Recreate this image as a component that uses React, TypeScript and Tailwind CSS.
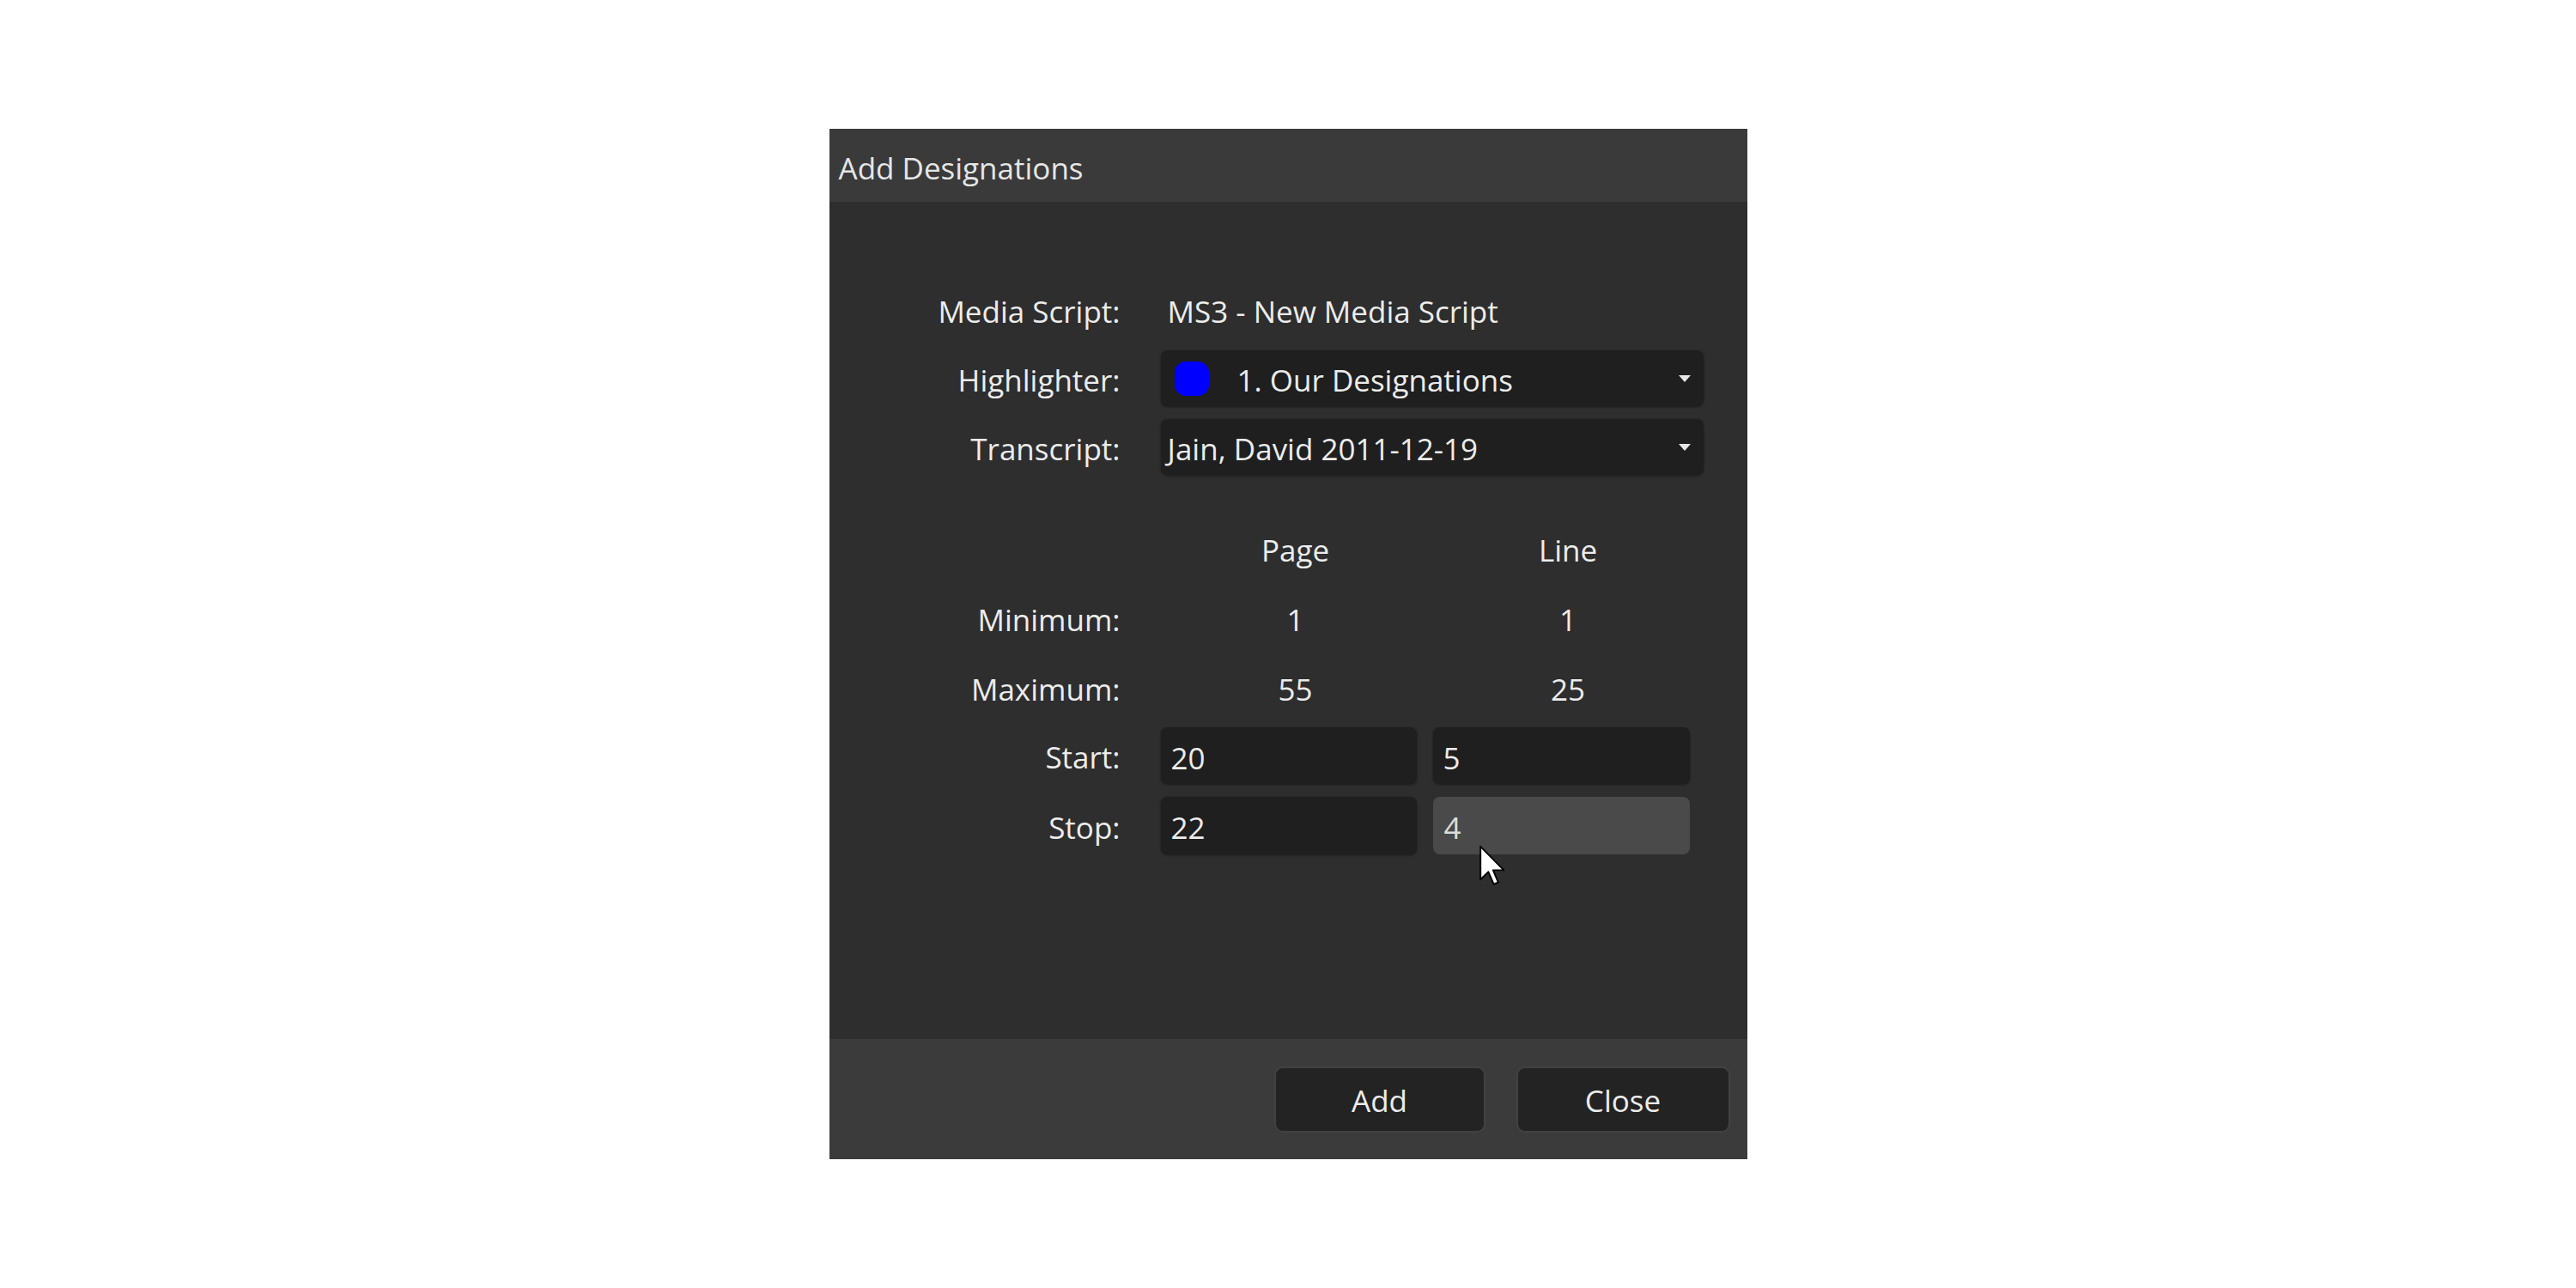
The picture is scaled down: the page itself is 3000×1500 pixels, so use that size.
import React from "react";

const font = { fontFamily: '"Open Sans", "Noto Sans", "Liberation Sans", sans-serif' };

function Caret() {
  return (
    <svg width="14" height="10" viewBox="0 0 14 10" className="shrink-0">
      <polygon points="0,1 14,1 7,9" fill="#e6e6e6" />
    </svg>
  );
}

function Cursor() {
  return (
    <svg
      width="30"
      height="48"
      viewBox="0 0 12.5 19.5"
      className="absolute left-[54px] top-[56px] pointer-events-none"
    >
      <path
        d="M0.5 0.5 L0.5 16.5 L4.3 12.8 L6.9 18.8 L9.1 17.9 L6.6 12 L11.8 12 Z"
        fill="#ffffff"
        stroke="#000000"
        strokeWidth="0.8"
        strokeLinejoin="round"
      />
    </svg>
  );
}

function Label({ children }: { children: React.ReactNode }) {
  return <div className="w-[339px] shrink-0 text-right">{children}</div>;
}

export default function App() {
  return (
    <div className="w-full min-h-screen bg-white flex items-center justify-center" style={font}>
      <div className="w-[1069px] h-[1200px] flex flex-col bg-[#2e2e2e] text-[35px] text-[#ececec] leading-none">
        {/* Title bar */}
        <div className="h-[85px] shrink-0 bg-[#3a3a3a] flex items-center pl-[11px] pt-[5px] text-[#e6e6e6]">
          Add Designations
        </div>

        {/* Body */}
        <div className="flex-1 flex flex-col pt-[95px]">
          <div className="h-[65px] flex items-center">
            <Label>Media Script:</Label>
            <div className="ml-[55px]">MS3 - New Media Script</div>
          </div>

          <div className="mt-[13px] h-[65px] flex items-center pt-[3px]">
            <Label>Highlighter:</Label>
            <div className="ml-[47px] w-[632px] h-[65px] -mt-[3px] rounded-[8px] bg-[#1f1f1f] shadow-[0_1px_3px_rgba(0,0,0,0.45)] flex items-center pl-[16px] pr-[15px]">
              <div className="w-[40px] h-[40px] rounded-[13px] bg-[#0000ff] shrink-0" />
              <div className="ml-[33px] flex-1 pt-[4px]">1. Our Designations</div>
              <Caret />
            </div>
          </div>

          <div className="mt-[15px] h-[65px] flex items-center pt-[3px]">
            <Label>Transcript:</Label>
            <div className="ml-[47px] w-[632px] h-[65px] -mt-[3px] rounded-[8px] bg-[#1f1f1f] shadow-[0_1px_3px_rgba(0,0,0,0.45)] flex items-center pl-[8px] pr-[15px]">
              <div className="flex-1 pt-[4px]">Jain, David 2011-12-19</div>
              <Caret />
            </div>
          </div>

          <div className="mt-[62px] h-[50px] flex items-center">
            <Label>{""}</Label>
            <div className="ml-[47px] w-[298px] pl-[16px] text-center">Page</div>
            <div className="ml-[19px] w-[299px] pl-[16px] text-center">Line</div>
          </div>

          <div className="mt-[31px] h-[50px] flex items-center">
            <Label>Minimum:</Label>
            <div className="ml-[47px] w-[298px] pl-[16px] text-center">1</div>
            <div className="ml-[19px] w-[299px] pl-[16px] text-center">1</div>
          </div>

          <div className="mt-[31px] h-[50px] flex items-center">
            <Label>Maximum:</Label>
            <div className="ml-[47px] w-[298px] pl-[16px] text-center">55</div>
            <div className="ml-[19px] w-[299px] pl-[16px] text-center">25</div>
          </div>

          <div className="mt-[20px] h-[66px] flex items-center pt-[3px]">
            <Label>Start:</Label>
            <div className="ml-[47px] w-[298px] h-[66px] -mt-[3px] rounded-[8px] bg-[#1f1f1f] shadow-[0_1px_3px_rgba(0,0,0,0.45)] flex items-center pl-[12px] pt-[4px]">
              20
            </div>
            <div className="ml-[19px] w-[299px] h-[66px] -mt-[3px] rounded-[8px] bg-[#1f1f1f] shadow-[0_1px_3px_rgba(0,0,0,0.45)] flex items-center pl-[12px] pt-[4px]">
              5
            </div>
          </div>

          <div className="mt-[15px] h-[67px] flex items-center pt-[3px]">
            <Label>Stop:</Label>
            <div className="ml-[47px] w-[298px] h-[67px] -mt-[3px] rounded-[8px] bg-[#1f1f1f] shadow-[0_1px_3px_rgba(0,0,0,0.45)] flex items-center pl-[12px] pt-[4px]">
              22
            </div>
            <div className="relative ml-[19px] w-[299px] h-[67px] -mt-[3px] rounded-[8px] bg-[#4a4a4a] flex items-center pl-[13px] pt-[4px] text-[#dcdcdc]">
              4
              <Cursor />
            </div>
          </div>
        </div>

        {/* Footer */}
        <div className="h-[140px] shrink-0 bg-[#3b3b3b] flex items-center justify-end gap-[40px] pr-[22px]">
          <button className="w-[242px] h-[73px] rounded-[8px] bg-[#232323] text-[#ececec] pt-[3px] shadow-[0_0_0_2px_rgba(70,70,70,0.6)]">
            Add
          </button>
          <button className="w-[245px] h-[73px] rounded-[8px] bg-[#232323] text-[#ececec] pt-[3px] shadow-[0_0_0_2px_rgba(70,70,70,0.6)]">
            Close
          </button>
        </div>
      </div>
    </div>
  );
}
